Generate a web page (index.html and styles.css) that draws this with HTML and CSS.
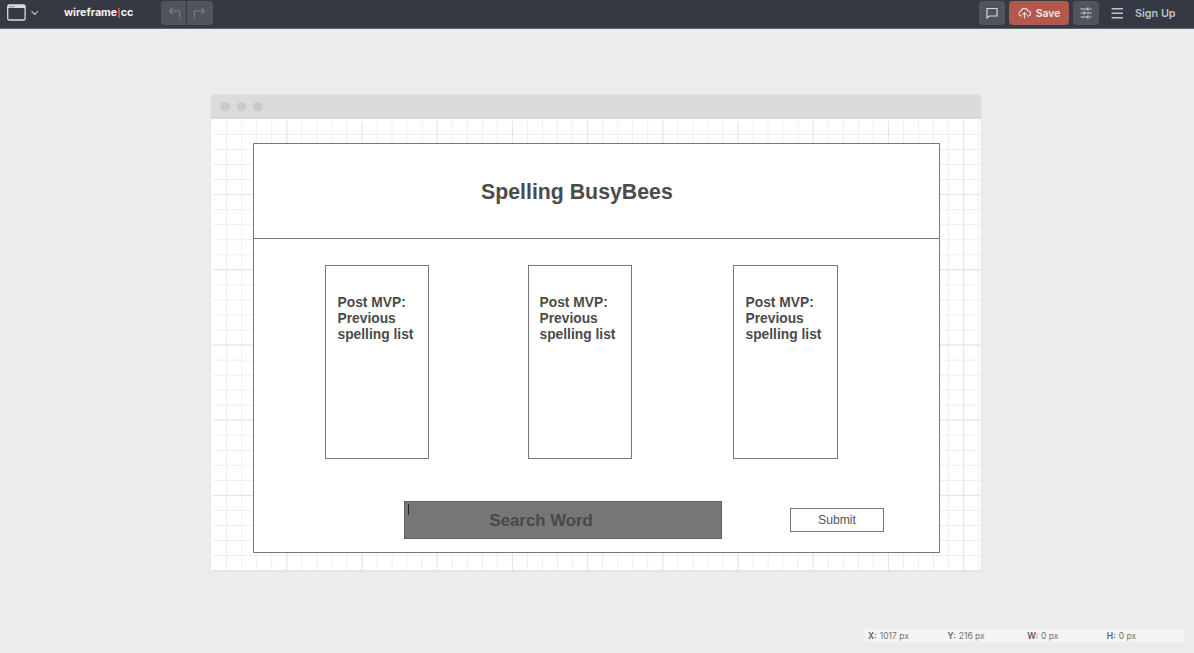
FILE: index.html
```html
<!DOCTYPE html>
<html lang="en">
<head>
<meta charset="utf-8">
<title>wireframe|cc</title>
<link rel="stylesheet" href="styles.css">
</head>
<body>
<header class="toolbar">
  <div class="toolbar-left">
    <svg class="icon-window" width="24" height="18" viewBox="0 0 24 18" fill="none" stroke="#d8d9dc">
      <rect x="0.7" y="1" width="17.4" height="15" rx="1.6" stroke-width="1.3"/>
      <path d="M1 2.500h17" stroke-width="3"/>
      <path d="M2.500 2.700h5" stroke="#555963" stroke-width="1.100" stroke-dasharray="1.100 .7"/>
    </svg>
    <svg class="icon-chevron" width="8" height="6" viewBox="0 0 8 6" fill="none" stroke="#c2c4c8" stroke-width="1.100"><path d="M.5 1.200 3.700 4.400l3.200-3.200"/></svg>
    <div class="brand">wireframe<span class="brand-bar"></span>cc</div>
    <div class="history">
      <button class="history-btn"><svg width="14" height="12" viewBox="0 0 14 12" fill="none" stroke="#7b7e86" stroke-width="1.100"><path d="M5.600 1 2.600 4l3 3M2.600 4h10v7.500"/></svg></button>
      <button class="history-btn"><svg width="14" height="12" viewBox="0 0 14 12" fill="none" stroke="#7b7e86" stroke-width="1.100"><path d="m8.400 1 3 3-3 3M11.400 4h-10v7.500"/></svg></button>
    </div>
  </div>
  <div class="toolbar-right">
    <button class="tool"><svg width="12" height="12" viewBox="0 0 12 12" fill="none" stroke="#d4d5d8" stroke-width="1.200"><path d="M1 1.500h10v7.500H3.500L1 11z"/></svg></button>
    <button class="save"><svg width="13" height="12" viewBox="0 0 13 12" fill="none" stroke="#f0d9d5" stroke-width="1.100"><path d="M4 9H3A2.400 2.400 0 0 1 2.700 4.300A3.800 3.800 0 0 1 10 4a2.500 2.500 0 0 1 .2 5H9M6.500 11.500V5.700M4.300 7.800l2.200-2.200 2.200 2.200"/></svg><span class="save-label">Save</span></button>
    <button class="tool"><svg width="12" height="12" viewBox="0 0 12 12" fill="none" stroke="#d4d5d8" stroke-width="1.200"><path d="M.5 2h7.500M9.500 2h2M8 .2v3.600M.5 6h2M4 6h7.500M4 4.200v3.600M.5 10h7.500M9.500 10h2M8 8.200v3.600"/></svg></button>
    <svg class="icon-menu" width="12" height="12" viewBox="0 0 12 12" stroke="#c4c5c9" stroke-width="1.400"><path d="M.6 1.700h11.400M.6 6.200h11.400M.6 10.700h11.400"/></svg>
    <a class="signup">Sign Up</a>
  </div>
</header>
<main class="workspace">
  <section class="browser">
    <div class="browser-bar"><i class="dot"></i><i class="dot"></i><i class="dot"></i></div>
    <div class="grid">
      <svg class="grid-lines" width="770" height="452">
        <defs>
          <pattern id="minor" width="15.040" height="15.040" x="1.100" y="0.900" patternUnits="userSpaceOnUse"><path d="M14.540 0v15.040M0 14.540h15.040" stroke="#ededed" fill="none"/></pattern>
          <pattern id="major" width="75.200" height="75.200" x="1.100" y="0.900" patternUnits="userSpaceOnUse"><path d="M74.700 0v75.200M0 74.700h75.200" stroke="#e4e4e4" fill="none"/></pattern>
        </defs>
        <rect x="2" y="2" width="768" height="450" fill="url(#minor)"/>
        <rect x="2" y="2" width="768" height="450" fill="url(#major)"/>
      </svg>
      <div class="page">
        <div class="page-head"><h1 class="title">Spelling BusyBees</h1></div>
        <div class="cards">
          <div class="card">Post MVP:<br>Previous<br>spelling list</div>
          <div class="card">Post MVP:<br>Previous<br>spelling list</div>
          <div class="card">Post MVP:<br>Previous<br>spelling list</div>
        </div>
        <div class="search-row">
          <div class="search"><span class="caret"></span><span class="search-label">Search Word</span></div>
          <div class="submit">Submit</div>
        </div>
      </div>
    </div>
  </section>
</main>
<footer class="status">
  <span><b>X:</b> 1017 px</span><span><b>Y:</b> 216 px</span><span><b>W:</b> 0 px</span><span><b>H:</b> 0 px</span>
</footer>
</body>
</html>
```

FILE: styles.css
```css
* { box-sizing: border-box; }

body {
  margin: 0;
  height: 653px;
  overflow: hidden;
  display: flex;
  flex-direction: column;
  background: #ececec;
  font-family: Inter, "Liberation Sans", sans-serif;
}

button {
  border: 0;
  padding: 0;
  font: inherit;
}

.toolbar {
  flex: none;
  height: 29px;
  padding: 0 19px 3px 7px;
  display: flex;
  align-items: center;
  justify-content: space-between;
  background: #353944;
  border-bottom: 1px solid #63656c;
}

.toolbar-left, .toolbar-right { display: flex; align-items: center; }
.icon-window { margin-top: 1px; }
.icon-chevron { margin-top: 1px; }

.brand {
  width: 97px;
  padding-left: 25px;
  font-size: 10.700px;
  line-height: 16px;
  font-weight: 700;
  color: #f1f1f2;
  white-space: nowrap;
}
.brand-bar {
  display: inline-block;
  width: 1.500px;
  height: 10px;
  margin: 0 1px;
  vertical-align: -2px;
  background: #c9513f;
}

.history { display: flex; gap: 1px; margin-left: 25px; }
.history-btn {
  width: 26px;
  height: 24px;
  display: flex;
  align-items: center;
  justify-content: center;
  background: #50545e;
}
.history-btn:first-child { width: 25px; border-radius: 4px 0 0 4px; }
.history-btn:last-child { border-radius: 0 4px 4px 0; }

.tool, .save {
  height: 24px;
  display: flex;
  align-items: center;
  justify-content: center;
  border-radius: 4px;
}
.tool { width: 26px; background: #50545e; }
.save {
  width: 60px;
  margin: 0 4px;
  gap: 5px;
  background: #b1594d;
  color: #f6e7e4;
  font-size: 10.400px;
  font-weight: 600;
}
.save-label { padding-top: 1px; }
.icon-menu { margin: 0 11px 0 12px; }
.signup { width: 41px; padding: 1px 0 0 1px; font-size: 10.800px; font-weight: 600; color: #bfc0c4; white-space: nowrap; }

.workspace { flex: 1; padding: 66px 0 0 211px; }

.browser {
  width: 770px;
  height: 476px;
  border-radius: 4px 4px 0 0;
  overflow: hidden;
  box-shadow: 0 0 0 1px #e6e6e6;
}
.browser-bar {
  height: 24px;
  padding: 0 0 1px 9px;
  display: flex;
  align-items: center;
  gap: 7px;
  background: #dbdbdb;
}
.dot { width: 9.500px; height: 9.500px; border-radius: 50%; background: #c9c9c9; }

.grid {
  position: relative;
  height: 452px;
  padding: 24px 0 0 42px;
  background: #fff;
}
.grid-lines { position: absolute; inset: 0; }

.page {
  position: relative;
  width: 687px;
  height: 410px;
  border: 1px solid #777;
  background: #fff;
  color: #4b4b4b;
  font-family: "Liberation Sans", Arial, sans-serif;
}
.page-head {
  height: 95px;
  padding: 35px 0 0 227px;
  border-bottom: 1px solid #777;
}
.title { margin: 0; font-size: 21.300px; line-height: 27px; font-weight: 700; white-space: nowrap; }

.cards { display: flex; padding: 26px 0 0 71px; }
.card {
  width: 104px;
  height: 194px;
  padding: 29px 0 0 11.500px;
  border: 1px solid #777;
  font-size: 13.800px;
  line-height: 16px;
  font-weight: 700;
  white-space: nowrap;
}
.card:nth-child(2) { margin: 0 101px 0 99px; padding-left: 10.500px; }
.card:nth-child(3) { width: 105px; }

.search-row { display: flex; align-items: center; padding: 42px 0 0 149px; }
.search {
  position: relative;
  width: 318px;
  height: 38px;
  margin-left: 0.500px;
  padding-left: 85px;
  border: 1px solid #626262;
  background: #767676;
  font-size: 16.800px;
  line-height: 37px;
  font-weight: 700;
  color: #494949;
}
.caret {
  position: absolute;
  left: 3.500px;
  top: 2px;
  width: 1px;
  height: 11px;
  background: #222;
}
.submit {
  width: 94px;
  height: 24px;
  margin-left: 68px;
  border: 1px solid #777;
  font-size: 12.200px;
  line-height: 23px;
  text-align: center;
  text-indent: 1px;
  color: #565656;
}

.status {
  flex: none;
  width: 319px;
  height: 13px;
  margin: 0 0 11px 865px;
  padding-left: 3px;
  display: grid;
  grid-template-columns: repeat(4, 79.600px);
  background: #f5f5f5;
  color: #737373;
  font-size: 8.500px;
  line-height: 14px;
  white-space: nowrap;
}
.status b { margin-right: .5px; font-weight: 600; color: #606060; }
```
